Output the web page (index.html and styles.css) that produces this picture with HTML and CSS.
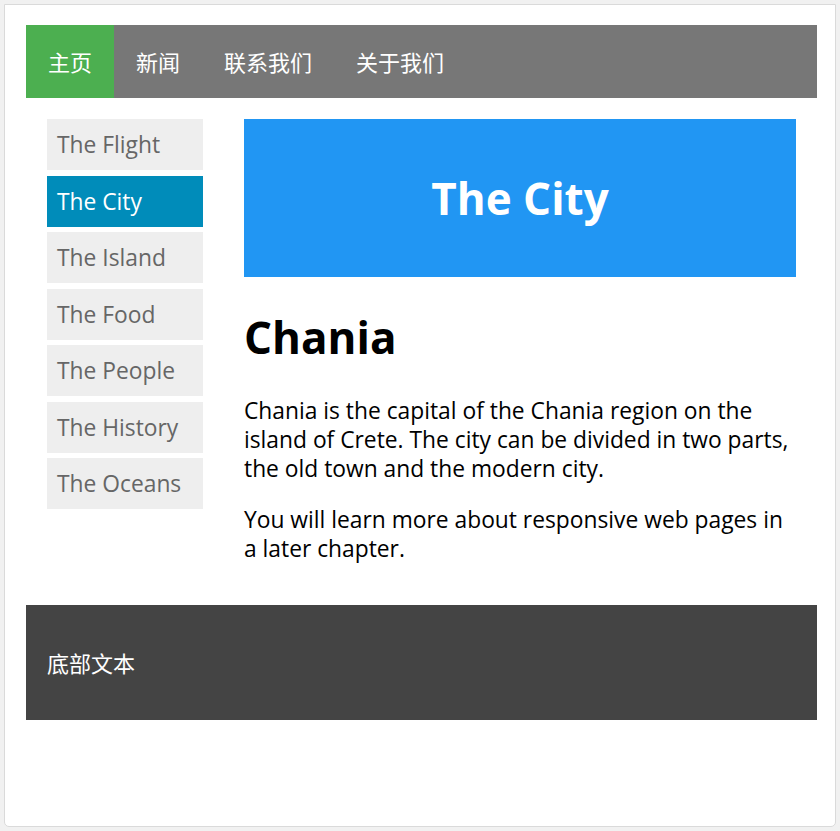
FILE: index.html
```html
<!DOCTYPE html>
<html lang="zh">
<head>
<meta charset="utf-8">
<title>The City</title>
<link rel="stylesheet" href="styles.css">
</head>
<body>
<div class="frame">
  <nav class="topnav">
    <a class="nav-item active" href="#">主页</a>
    <a class="nav-item" href="#">新闻</a>
    <a class="nav-item" href="#">联系我们</a>
    <a class="nav-item" href="#">关于我们</a>
  </nav>
  <div class="row">
    <ul class="menu">
      <li>The Flight</li>
      <li class="current">The City</li>
      <li>The Island</li>
      <li>The Food</li>
      <li>The People</li>
      <li>The History</li>
      <li>The Oceans</li>
    </ul>
    <div class="main">
      <div class="banner"><h1>The City</h1></div>
      <h1 class="title">Chania</h1>
      <p>Chania is the capital of the Chania region on the island of Crete. The city can be divided in two parts, the old town and the modern city.</p>
      <p>You will learn more about responsive web pages in a later chapter.</p>
    </div>
  </div>
  <footer class="footer"><p>底部文本</p></footer>
</div>
</body>
</html>
```

FILE: styles.css
```css
* { box-sizing: border-box; }
html, body { margin: 0; padding: 0; }
body {
  background: #f1f1f1;
  padding: 4px;
  font-family: "Open Sans", "Noto Sans CJK SC", sans-serif;
  font-size: 22.8px;
  line-height: 29px;
  color: #000;
}
.frame {
  background: #fff;
  border: 1px solid #dadada;
  border-radius: 0 0 5px 5px;
  height: 823px;
  padding: 20px 18px 0 21px;
}
.topnav {
  display: flex;
  background: #777777;
}
.nav-item {
  display: block;
  padding: 22px;
  color: #fff;
  text-decoration: none;
  font-family: "Noto Sans CJK SC", sans-serif;
  font-size: 22px;
  line-height: 29px;
}
.nav-item.active { background: #4CAF50; }
.row {
  display: flex;
  align-items: flex-start;
  gap: 41px;
  padding: 21px 21px 20px;
}
.menu {
  list-style: none;
  margin: 0;
  padding: 0;
  width: 156px;
  flex: none;
}
.menu li {
  background: #eeeeee;
  color: #666;
  padding: 11px 10px;
  height: 51px;
  margin-bottom: 5.5px;
  white-space: nowrap;
}
.menu li.current {
  background: #008CBA;
  color: #fff;
}
.main { flex: 1; }
.banner {
  background: #2196F3;
  color: #fff;
  text-align: center;
  padding: 20px;
}
h1 {
  font-size: 44px;
  line-height: 58.5px;
  font-weight: 700;
  margin: 29.5px 0;
}
.title { margin-top: 31.5px; }
p { margin: 22px 0; }
.footer {
  background: #444444;
  color: #fff;
  padding: 21px;
  font-family: "Noto Sans CJK SC", sans-serif;
  font-size: 22px;
}
```
